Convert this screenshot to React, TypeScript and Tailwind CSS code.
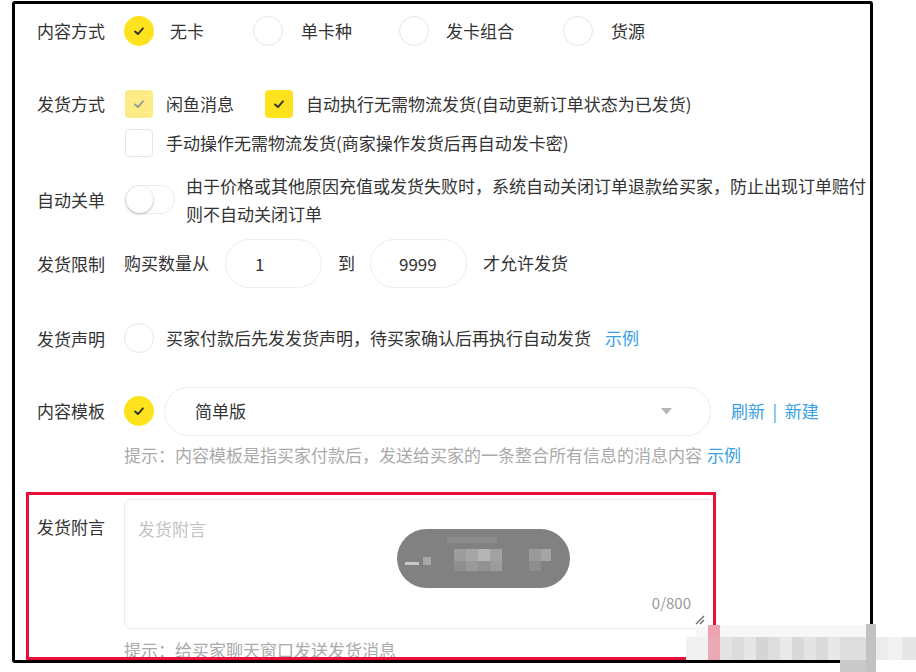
import React from "react";

const Check = ({ color = "#333" }: { color?: string }) => (
  <svg width="14" height="14" viewBox="0 0 16 16" fill="none">
    <polyline points="3.5,8.5 6.8,11.5 12.5,5" stroke={color} strokeWidth="2.2" strokeLinecap="round" strokeLinejoin="round" />
  </svg>
);

const RadioOn = () => (
  <div className="w-[30px] h-[30px] rounded-full bg-[#fee21d] flex items-center justify-center shrink-0">
    <Check />
  </div>
);
const RadioOff = () => (
  <div className="w-[30px] h-[30px] rounded-full border-[1.5px] border-[#e6e6e6] bg-white shrink-0" />
);

const Label = ({ children }: { children: React.ReactNode }) => (
  <div className="w-[87px] shrink-0 text-[#333]">{children}</div>
);

const mosaic: [number, number, number, number, string][] = [
  [686, 637, 22, 23, "#f1f1f1"],
  [696, 627, 12, 10, "#f7f7f7"],
  [708, 625, 12, 12, "#eea3b1"],
  [708, 637, 12, 23, "#e9a9b5"],
  [720, 625, 146, 12, "#f7f7f7"],
  [720, 637, 12, 23, "#e3e3e3"],
  [732, 637, 12, 23, "#dcdcdc"],
  [744, 637, 12, 23, "#e6e6e6"],
  [756, 637, 12, 23, "#d5d5d5"],
  [768, 637, 12, 23, "#dedede"],
  [780, 637, 12, 23, "#e9e9e9"],
  [792, 637, 12, 23, "#d9d9d9"],
  [804, 637, 12, 23, "#e4e4e4"],
  [816, 637, 12, 23, "#dadada"],
  [828, 637, 12, 23, "#e8e8e8"],
  [840, 637, 26, 23, "#dedede"],
  [866, 624, 10, 48, "#c2c2c2"],
  [840, 660, 26, 12, "#c9c9c9"],
  [876, 637, 12, 23, "#ececec"],
  [888, 637, 14, 23, "#f2f2f2"],
  [902, 637, 14, 23, "#e6e6e6"],
];

export default function App() {
  return (
    <div
      className="relative w-[916px] h-[672px] bg-white overflow-hidden text-[17px] text-[#333]"
      style={{ fontFamily: '"Noto Sans CJK SC", "Noto Sans", sans-serif' }}
    >
      <div className="pl-[12px] pt-[1px]">
        <div className="relative w-[861px] h-[662px] border-[3px] border-black rounded-[3px] flex flex-col pt-[8px]">
          {/* Row 1 */}
          <div className="flex items-center h-[38px] pl-[22px]">
            <Label>内容方式</Label>
            <RadioOn />
            <span className="ml-[16px] leading-[24px]">无卡</span>
            <div className="ml-[49px]"><RadioOff /></div>
            <span className="ml-[18px] leading-[24px]">单卡种</span>
            <div className="ml-[47px]"><RadioOff /></div>
            <span className="ml-[17px] leading-[24px]">发卡组合</span>
            <div className="ml-[49px]"><RadioOff /></div>
            <span className="ml-[18px] leading-[24px]">货源</span>
          </div>

          {/* Row 2 */}
          <div className="flex items-center h-[32px] mt-[38px] pl-[22px]">
            <Label>发货方式</Label>
            <div className="ml-[1px] w-[28px] h-[28px] rounded-[4px] bg-[#fdec86] flex items-center justify-center shrink-0">
              <Check color="#999" />
            </div>
            <span className="ml-[13px] leading-[24px]">闲鱼消息</span>
            <div className="ml-[31px] w-[28px] h-[28px] rounded-[4px] bg-[#fee21d] flex items-center justify-center shrink-0">
              <Check />
            </div>
            <span className="ml-[13px] leading-[24px]">自动执行无需物流发货(自动更新订单状态为已发货)</span>
          </div>
          <div className="flex items-center h-[32px] mt-[7px] pl-[22px]">
            <div className="w-[87px] shrink-0" />
            <div className="ml-[1px] w-[28px] h-[28px] rounded-[4px] border-[1.5px] border-[#e6e6e6] bg-white shrink-0" />
            <span className="ml-[13px] leading-[24px]">手动操作无需物流发货(商家操作发货后再自动发卡密)</span>
          </div>

          {/* Row 3 */}
          <div className="flex items-center h-[56px] mt-[13px] pl-[22px]">
            <Label>自动关单</Label>
            <div className="ml-[1px] w-[50px] h-[29px] rounded-full border border-[#ececec] bg-white relative shrink-0">
              <div className="absolute left-[0px] top-[0px] w-[27px] h-[27px] rounded-full bg-white shadow-[0_1px_3px_rgba(0,0,0,0.28)]" />
            </div>
            <div className="ml-[11px] leading-[28px] whitespace-nowrap">
              <div>由于价格或其他原因充值或发货失败时，系统自动关闭订单退款给买家，防止出现订单赔付</div>
              <div>则不自动关闭订单</div>
            </div>
          </div>

          {/* Row 4 */}
          <div className="flex items-center h-[50px] mt-[11px] pl-[22px]">
            <Label>发货限制</Label>
            <span className="leading-[24px]">购买数量从</span>
            <div className="ml-[16px] w-[97px] h-[49px] rounded-full border border-[#ededed] flex items-center pl-[29px]">1</div>
            <span className="ml-[16px] leading-[24px]">到</span>
            <div className="ml-[15px] w-[97px] h-[49px] rounded-full border border-[#ededed] flex items-center pl-[28px]">9999</div>
            <span className="ml-[16px] leading-[24px]">才允许发货</span>
          </div>

          {/* Row 5 */}
          <div className="flex items-center h-[32px] mt-[34px] pl-[22px]">
            <Label>发货声明</Label>
            <RadioOff />
            <span className="ml-[12px] leading-[24px]">买家付款后先发发货声明，待买家确认后再执行自动发货</span>
            <span className="ml-[14px] leading-[24px] text-[#3aa1e4]">示例</span>
          </div>

          {/* Row 6 */}
          <div className="flex items-center h-[50px] mt-[32px] pl-[22px]">
            <Label>内容模板</Label>
            <RadioOn />
            <div className="ml-[10px] w-[547px] h-[49px] rounded-full border border-[#ededed] flex items-center pl-[30px] pr-[38px] justify-between">
              <span>简单版</span>
              <svg width="11" height="7" viewBox="0 0 11 7">
                <polygon points="0,0 11,0 5.5,6.5" fill="#b5b5b5" />
              </svg>
            </div>
            <span className="ml-[20px] leading-[24px] text-[#3aa1e4] whitespace-pre">刷新  |  新建</span>
          </div>
          <div className="flex items-center h-[24px] mt-[7px] pl-[22px]">
            <div className="w-[87px] shrink-0" />
            <span className="text-[#aaa]">提示：内容模板是指买家付款后，发送给买家的一条整合所有信息的消息内容</span>
            <span className="ml-[5px] text-[#3aa1e4]">示例</span>
          </div>

          {/* Red box */}
          <div className="mt-[25px] ml-[11px] w-[690px] h-[168px] border-[3px] border-[#e6103b] overflow-hidden pt-[4px] pl-[8px] shrink-0">
            <div className="flex">
              <div className="w-[87px] shrink-0 pt-[16px] leading-[24px]">发货附言</div>
              <div className="flex flex-col">
                <div className="relative w-[590px] h-[130px] rounded-[6px] border border-[#ececec] pl-[13px] pt-[16px]">
                  <span className="leading-[24px] text-[#c4c4c4]">发货附言</span>
                  <span className="absolute right-[22px] bottom-[13px] text-[15px] text-[#999]">0/800</span>
                  <svg className="absolute right-[8px] bottom-[3px]" width="10" height="10" viewBox="0 0 10 10">
                    <line x1="1" y1="9" x2="9" y2="1" stroke="#666" strokeWidth="1.2" />
                    <line x1="5" y1="9" x2="9" y2="5" stroke="#666" strokeWidth="1.2" />
                  </svg>
                </div>
                <div className="mt-[9px] leading-[24px] text-[#aaa]">提示：给买家聊天窗口发送发货消息</div>
              </div>
            </div>
          </div>
        </div>
      </div>

      {/* blurred toast overlay */}
      <div className="absolute left-[397px] top-[529px] w-[173px] h-[59px] rounded-full bg-[#818181] overflow-hidden">
        <div className="absolute left-[8px] top-[33px] w-[14px] h-[3px] bg-[#c8c8c8]" />
        <div className="absolute left-[26px] top-[28px] w-[8px] h-[8px] bg-[#a8a8a8]" />
        <div className="absolute left-[50px] top-[8px] w-[50px] h-[6px] bg-[#8c8c8c]" />
        <div className="absolute left-[57px] top-[20px] w-[12px] h-[12px] bg-[#9d9d9d]" />
        <div className="absolute left-[69px] top-[20px] w-[12px] h-[12px] bg-[#a6a6a6]" />
        <div className="absolute left-[81px] top-[20px] w-[12px] h-[12px] bg-[#b5b5b5]" />
        <div className="absolute left-[93px] top-[20px] w-[12px] h-[12px] bg-[#a2a2a2]" />
        <div className="absolute left-[57px] top-[32px] w-[12px] h-[10px] bg-[#8f8f8f]" />
        <div className="absolute left-[69px] top-[32px] w-[12px] h-[10px] bg-[#9a9a9a]" />
        <div className="absolute left-[81px] top-[32px] w-[12px] h-[10px] bg-[#929292]" />
        <div className="absolute left-[93px] top-[32px] w-[12px] h-[10px] bg-[#9c9c9c]" />
        <div className="absolute left-[132px] top-[20px] w-[12px] h-[12px] bg-[#9a9a9a]" />
        <div className="absolute left-[144px] top-[20px] w-[10px] h-[12px] bg-[#a5a5a5]" />
        <div className="absolute left-[132px] top-[32px] w-[12px] h-[10px] bg-[#8e8e8e]" />
      </div>

      {/* watermark mosaic */}
      {mosaic.map(([x, y, w, h, c], i) => (
        <div key={i} className="absolute" style={{ left: x, top: y, width: w, height: h, background: c }} />
      ))}
    </div>
  );
}
